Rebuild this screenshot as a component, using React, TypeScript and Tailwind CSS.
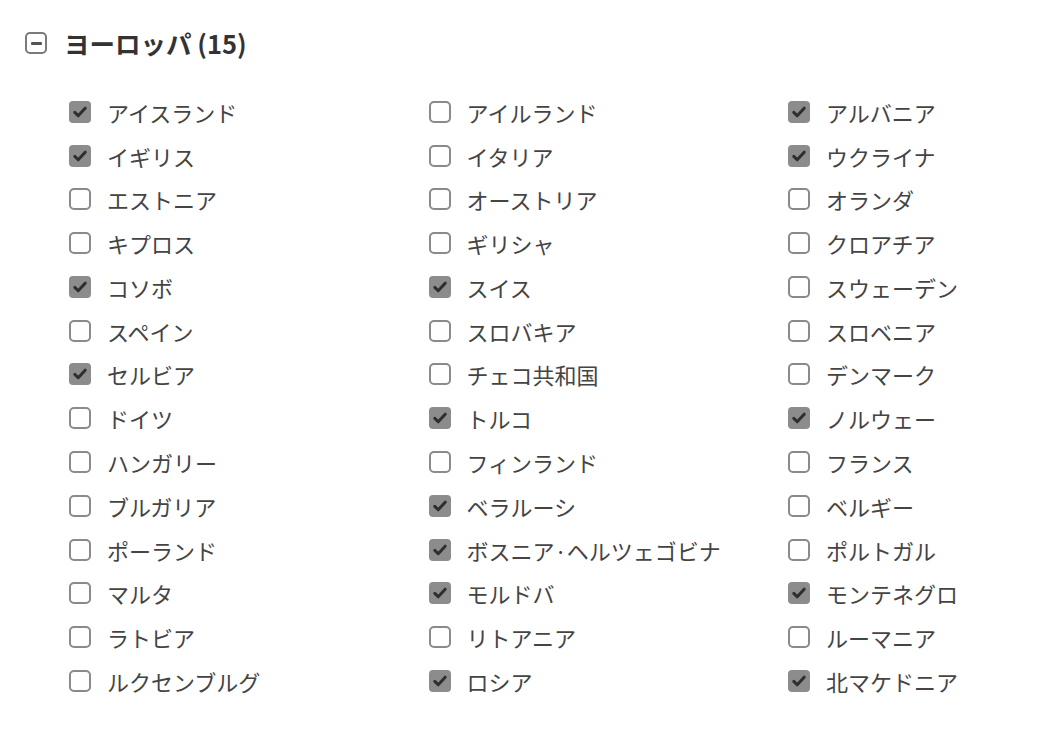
import React from "react";

const items: [string, boolean][] = [
  ["アイスランド", true], ["アイルランド", false], ["アルバニア", true],
  ["イギリス", true], ["イタリア", false], ["ウクライナ", true],
  ["エストニア", false], ["オーストリア", false], ["オランダ", false],
  ["キプロス", false], ["ギリシャ", false], ["クロアチア", false],
  ["コソボ", true], ["スイス", true], ["スウェーデン", false],
  ["スペイン", false], ["スロバキア", false], ["スロベニア", false],
  ["セルビア", true], ["チェコ共和国", false], ["デンマーク", false],
  ["ドイツ", false], ["トルコ", true], ["ノルウェー", true],
  ["ハンガリー", false], ["フィンランド", false], ["フランス", false],
  ["ブルガリア", false], ["ベラルーシ", true], ["ベルギー", false],
  ["ポーランド", false], ["ボスニア·ヘルツェゴビナ", true], ["ポルトガル", false],
  ["マルタ", false], ["モルドバ", true], ["モンテネグロ", true],
  ["ラトビア", false], ["リトアニア", false], ["ルーマニア", false],
  ["ルクセンブルグ", false], ["ロシア", true], ["北マケドニア", true],
];

function Box({ checked }: { checked: boolean }) {
  if (checked) {
    return (
      <div className="w-[22px] h-[22px] rounded-[4px] bg-[#8c8c8c] flex items-center justify-center shrink-0">
        <svg width="22" height="22" viewBox="0 0 22 22">
          <path d="M5.8 11.4 L9.2 14.8 L16.2 7.2" fill="none" stroke="#2e2e2e" strokeWidth="3" strokeLinecap="round" strokeLinejoin="round" />
        </svg>
      </div>
    );
  }
  return <div className="w-[22px] h-[22px] rounded-[5px] border-2 border-[#8a8a8a] bg-white shrink-0" />;
}

export default function App() {
  return (
    <div
      className="w-[1052px] h-[729px] bg-white text-[#3a3a3a] overflow-hidden"
      style={{ fontFamily: '"Noto Sans CJK JP", "Noto Sans", sans-serif' }}
    >
      <div className="pt-[21px] pl-[25px] h-[65px] flex items-center gap-[17px]">
        <div className="w-[22px] h-[22px] rounded-[5px] border-2 border-[#7a7a7a] flex items-center justify-center">
          <div className="w-[11px] h-[3px] rounded-[1px] bg-[#555]" />
        </div>
        <div className="text-[25.5px] font-bold text-[#333] leading-none">ヨーロッパ (15)</div>
      </div>
      <div className="mt-[25px] ml-[69px] grid grid-cols-[359.5px_359.5px_1fr] auto-rows-[43.77px]">
        {items.map(([name, checked]) => (
          <div key={name} className="flex items-center gap-[16px]">
            <Box checked={checked} />
            <span className="text-[22px] leading-none whitespace-nowrap text-[#444]">{name}</span>
          </div>
        ))}
      </div>
    </div>
  );
}
